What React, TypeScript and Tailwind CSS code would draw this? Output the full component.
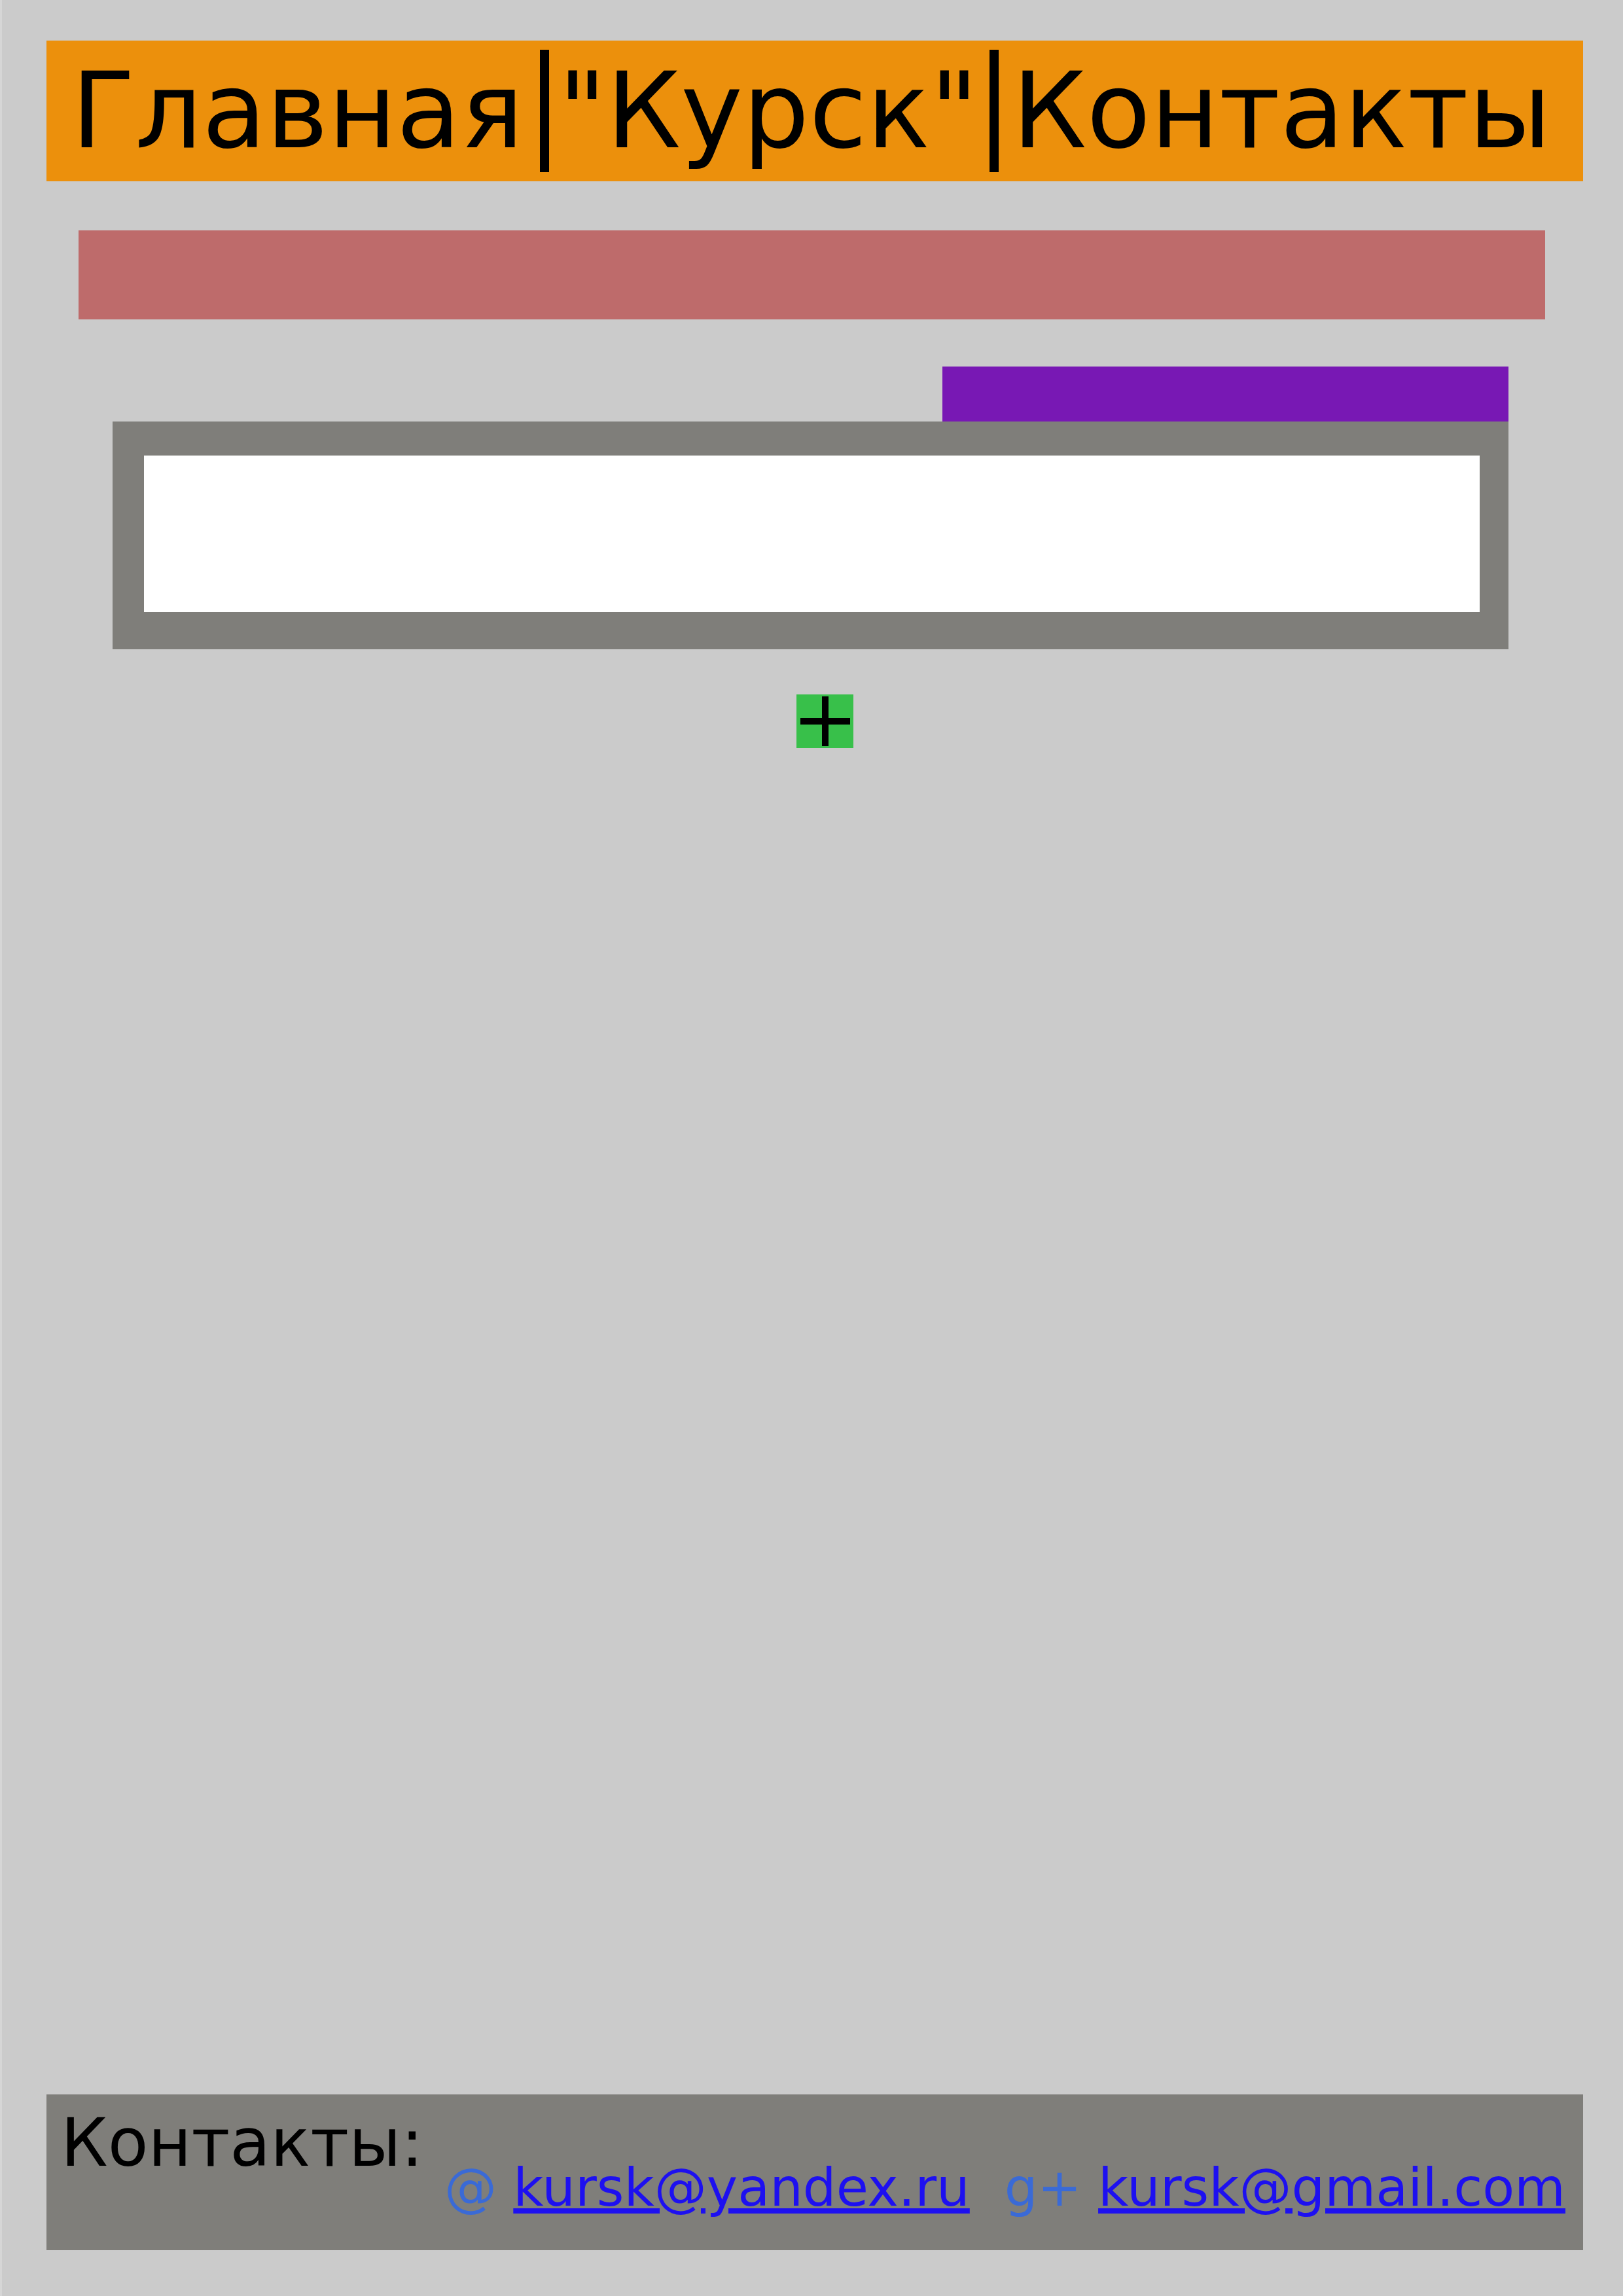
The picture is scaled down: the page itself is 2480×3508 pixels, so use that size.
export default function App() {
  return (
    <div className="w-[2480px] h-[3508px] bg-[#cbcbcb] flex flex-col border-l-[3px] border-[#d6d6d6]" style={{ fontFamily: '"DejaVu Sans", sans-serif' }}>
      <header className="mt-[62px] ml-[68px] w-[2348px] h-[215px] bg-[#ec900c] flex items-center justify-start pl-[38px] text-[160px] leading-[187px] text-black whitespace-nowrap">
        <span className="pr-[25px]">Главная</span>
        <span className="border-x-[14px] border-black pl-[14px] pr-[17px]">"Курск"</span>
        <span className="pl-[21px]">Контакты</span>
      </header>
      <div className="mt-[75px] ml-[117px] w-[2241px] h-[136px] bg-[#be6b6b]" />
      <div className="mt-[72px] ml-[1437px] w-[865px] h-[84px] bg-[#7818b4]" />
      <div className="ml-[169px] w-[2133px] h-[348px] bg-[#7f7e7a] pl-[48px] pt-[52px]">
        <div className="w-[2041px] h-[239px] bg-white" />
      </div>
      <div className="mt-[69px] ml-[1214px] w-[87px] h-[82px] bg-[#38c04a] flex items-center justify-center">
        <svg width="76" height="76" viewBox="0 0 76 76">
          <rect x="33" y="0" width="10" height="76" fill="#000" />
          <rect x="0" y="33" width="76" height="10" fill="#000" />
        </svg>
      </div>
      <footer className="mt-auto mb-[70px] ml-[68px] w-[2348px] h-[238px] bg-[#7f7e7a] flex items-start pl-[22px]">
        <span className="mt-[16px] text-[101px] leading-[117px] text-black">Контакты:</span>
        <div className="mt-[96px] ml-[32px] text-[80px] leading-[93px] whitespace-nowrap">
          <span className="text-[#3a6ad6]">@</span>{' '}
          <a href="#" className="text-[#1d10f0] underline">kursk@yandex.ru</a>
          <span className="text-[#3a6ad6] ml-[53px]">g+</span>{' '}
          <a href="#" className="text-[#1d10f0] underline">kursk@gmail.com</a>
        </div>
      </footer>
    </div>
  );
}
